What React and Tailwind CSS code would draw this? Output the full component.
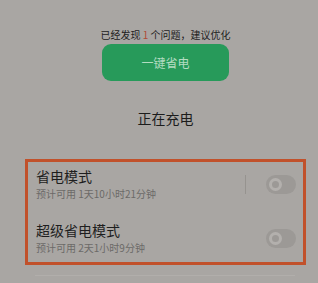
import React from 'react';

const Toggle = () => (
  <div className="w-[30px] h-[19px] rounded-full bg-[#9c9996] flex items-center pl-[3px]">
    <div className="w-[13px] h-[13px] rounded-full border-[3px] border-[#b3b0ad] bg-[#9c9996]" />
  </div>
);

const modes = [
  { title: '省电模式', sub: '预计可用 1天10小时21分钟', divider: true },
  { title: '超级省电模式', sub: '预计可用 2天1小时9分钟', divider: false },
];

export default function App() {
  return (
    <div
      className="w-[318px] h-[283px] overflow-hidden bg-[#a9a6a3] pl-[13px] pt-[28px] flex flex-col"
      style={{ fontFamily: '"Noto Sans CJK SC", "Noto Sans", sans-serif' }}
    >
      {/* Hint + action */}
      <div className="flex flex-col items-center">
        <p className="text-[10px] leading-[14px] text-[#222]">
          已经发现 <span className="text-[#b04a35]">1</span> 个问题，建议优化
        </p>
        <button className="mt-[2px] w-[127px] h-[37px] rounded-[9px] bg-[#279a5a] text-[12px] text-[#b3dcc1]">
          一键省电
        </button>
        <h2 className="mt-[27px] text-[14px] leading-[20px] text-[#1c1c1c]">正在充电</h2>
      </div>

      {/* Power saving modes */}
      <div className="mt-[31px] mx-[12px] border-[3px] border-[#c1512b] pl-[8px] pr-[7px] pt-[5px] pb-[7px] flex flex-col gap-[20px]">
        {modes.map((m) => (
          <div key={m.title} className="flex items-center">
            <div className="flex-1">
              <p className="text-[14px] leading-[18px] text-[#1e1e1e]">{m.title}</p>
              <p className="mt-[2px] text-[10px] leading-[14px] text-[#6c6a68]">{m.sub}</p>
            </div>
            {m.divider && <div className="w-px h-[19px] bg-[#96938f] mr-[20px]" />}
            <Toggle />
          </div>
        ))}
      </div>
      <div className="mt-[10px] ml-[22px] mr-[23px] h-px bg-[#b1aeab]" />
    </div>
  );
}
